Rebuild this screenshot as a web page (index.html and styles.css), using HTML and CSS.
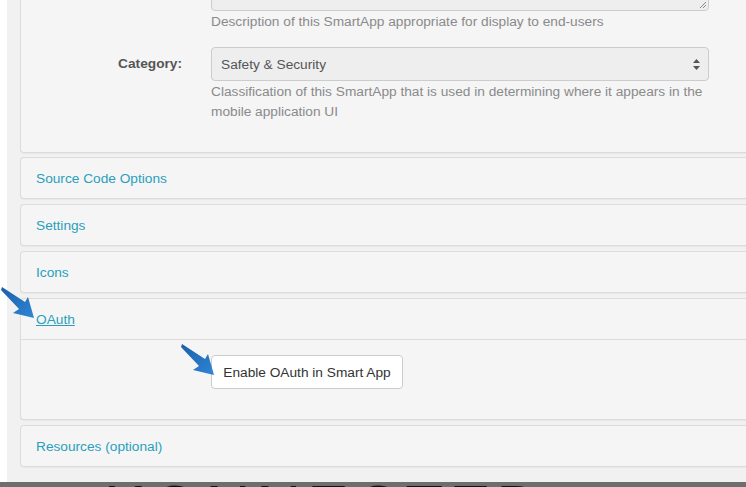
FILE: index.html
```html
<!DOCTYPE html>
<html>
<head>
<meta charset="utf-8">
<link rel="stylesheet" href="styles.css">
</head>
<body>
<div class="page">
  <div class="content">
    <div class="panel panel-form">
      <div class="form-row">
        <label class="label"></label>
        <div class="control">
          <div class="textarea"><span class="grip"></span></div>
          <p class="help">Description of this SmartApp appropriate for display to end-users</p>
        </div>
      </div>
      <div class="form-row">
        <label class="label">Category:</label>
        <div class="control">
          <div class="select">
            <span>Safety &amp; Security</span>
            <svg class="caret" width="7" height="11" viewBox="0 0 7 11"><path d="M3.5 0 L7 4 L0 4 Z M0 7 L7 7 L3.5 11 Z" fill="#555"/></svg>
          </div>
          <p class="help">Classification of this SmartApp that is used in determining where it appears in the mobile application UI</p>
        </div>
      </div>
    </div>

    <div class="panel"><div class="panel-heading"><a class="title">Source Code Options</a></div></div>
    <div class="panel"><div class="panel-heading"><a class="title">Settings</a></div></div>
    <div class="panel"><div class="panel-heading"><a class="title">Icons</a></div></div>
    <div class="panel">
      <div class="panel-heading open"><a class="title underline">OAuth</a></div>
      <div class="panel-body">
        <button class="btn">Enable OAuth in Smart App</button>
      </div>
    </div>
    <div class="panel"><div class="panel-heading"><a class="title">Resources (optional)</a></div></div>
  </div>
  <div class="banner"><span>KONNECTED</span></div>
</div>

<svg class="arrow arrow-1" width="40" height="34" viewBox="0 0 40 34">
  <defs>
    <linearGradient id="ag1" x1="0" y1="0" x2="1" y2="1">
      <stop offset="0" stop-color="#1a5fa8"/>
      <stop offset="1" stop-color="#2f86d6"/>
    </linearGradient>
  </defs>
  <polygon points="1,2 24,17 27,12 33,33 12,28 18,24 0,5" fill="url(#ag1)"/>
</svg>
<svg class="arrow arrow-2" width="40" height="34" viewBox="0 0 40 34">
  <defs>
    <linearGradient id="ag2" x1="0" y1="0" x2="1" y2="1">
      <stop offset="0" stop-color="#1a5fa8"/>
      <stop offset="1" stop-color="#2f86d6"/>
    </linearGradient>
  </defs>
  <polygon points="1,2 24,17 27,12 33,33 12,28 18,24 0,5" fill="url(#ag2)"/>
</svg>
</body>
</html>
```
FILE: styles.css
```css
html, body {
  margin: 0;
  padding: 0;
  height: 100%;
  overflow: hidden;
  background: #ffffff;
  font-family: "Liberation Sans", Arial, sans-serif;
}

.page {
  margin-left: 7px;
  height: 100%;
  background: #f1f1f1;
  display: flex;
  flex-direction: column;
}

.content {
  flex: none;
  padding-left: 13px;
  height: 482px;
  overflow: hidden;
}

.panel {
  background: #f5f5f5;
  border: 1px solid #dcdcdc;
  border-right: none;
  border-radius: 4px 0 0 4px;
  margin-bottom: 5px;
  box-shadow: 0 1px 1px rgba(0,0,0,0.04);
}

.panel-form {
  margin-top: -42px;
  padding: 0 0 30px 0;
  margin-bottom: 4px;
}

.form-row {
  display: grid;
  grid-template-columns: 161px 498px;
  column-gap: 29px;
  margin-bottom: 15px;
}
.form-row:last-child { margin-bottom: 0; }

.label {
  text-align: right;
  font-weight: bold;
  font-size: 13.7px;
  color: #555;
  line-height: 34px;
}

.textarea {
  height: 50px;
  border: 1px solid #ccc;
  border-radius: 4px;
  background: #eeeeee;
  position: relative;
}
.grip {
  position: absolute;
  right: 2px;
  bottom: 2px;
  width: 6px;
  height: 6px;
  background: linear-gradient(135deg, transparent 45%, #888 45%, #888 55%, transparent 55%, transparent 70%, #888 70%, #888 80%, transparent 80%);
}

.select {
  height: 32px;
  border: 1px solid #ccc;
  border-radius: 4px;
  background: #eeeeee;
  display: flex;
  align-items: center;
  justify-content: space-between;
  padding: 0 8px 0 9px;
  font-size: 13.7px;
  color: #555;
}

.help {
  margin: 1px 0 0 0;
  font-size: 13.7px;
  line-height: 20px;
  color: #8a8a8a;
}

.panel-heading {
  height: 40px;
  display: flex;
  align-items: center;
  padding: 0 15px;
}
.panel-heading.open {
  border-bottom: 1px solid #dcdcdc;
}

.title {
  font-size: 13.7px;
  color: #2a9fbc;
}
.title.underline {
  text-decoration: underline;
}

.panel-body {
  padding: 15px 0 30px 190px;
}

.btn {
  font-family: "Liberation Sans", Arial, sans-serif;
  font-size: 13.7px;
  color: #333;
  background: #fff;
  border: 1px solid #ccc;
  border-radius: 4px;
  height: 34px;
  width: 192px;
  padding: 0;
}

.banner {
  flex: none;
  height: 5px;
  background: #6e6e6e;
  margin-left: -7px;
  overflow: hidden;
  position: relative;
}
.banner span {
  position: absolute;
  left: 104px;
  top: -6px;
  font-size: 62px;
  font-weight: normal;
  color: #111;
  letter-spacing: 6px;
  line-height: 1;
}

.arrow {
  position: absolute;
}
.arrow-1 { left: 1px; top: 285px; }
.arrow-2 { left: 181px; top: 342px; }
```
